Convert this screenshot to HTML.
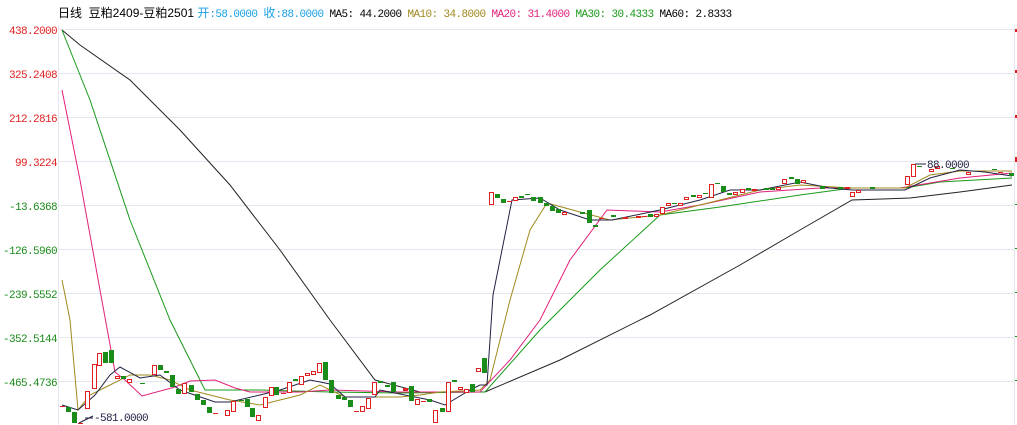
<!DOCTYPE html>
<html><head><meta charset="utf-8"><style>
body{margin:0;background:#fff;width:1017px;height:425px;overflow:hidden;font-family:"Liberation Mono","Noto Sans CJK SC",monospace}
.hd{position:absolute;left:58px;top:4px;font-size:12px;white-space:pre;font-family:"Liberation Sans","Noto Sans CJK SC",sans-serif}
.m{font-family:"Liberation Mono",monospace;font-size:11px;letter-spacing:-0.6px}
</style></head><body>
<div class="hd">日线  豆粕2409-豆粕2501 <span style="color:#1a9fe6">开<span class="m">:58.0000 </span>收<span class="m">:88.0000</span></span><span class="m"> MA5: 44.2000 <span style="color:#a08a1e">MA10: 34.8000</span> <span style="color:#e0207a">MA20: 31.4000</span> <span style="color:#1a9a1a">MA30: 30.4333</span> MA60: 2.8333</span></div>
<svg width="1017" height="425" style="position:absolute;left:0;top:0" xmlns="http://www.w3.org/2000/svg">
<g stroke="#e6e6f0" stroke-width="1">
<line x1="58" y1="29.5" x2="1014" y2="29.5"/><line x1="58" y1="73.5" x2="1014" y2="73.5"/><line x1="58" y1="117.5" x2="1014" y2="117.5"/><line x1="58" y1="161.5" x2="1014" y2="161.5"/><line x1="58" y1="205.5" x2="1014" y2="205.5"/><line x1="58" y1="249.5" x2="1014" y2="249.5"/><line x1="58" y1="293.5" x2="1014" y2="293.5"/><line x1="58" y1="337.5" x2="1014" y2="337.5"/><line x1="58" y1="381.5" x2="1014" y2="381.5"/>
<line x1="58.5" y1="25" x2="58.5" y2="425"/><line x1="1014.5" y1="25" x2="1014.5" y2="425"/>
</g>
<g font-size="11" letter-spacing="-0.6" text-anchor="end" font-family="Liberation Mono,monospace">
<text x="57" y="34" fill="#e02020">438.2000</text><text x="57" y="78" fill="#e02020">325.2408</text><text x="57" y="122" fill="#e02020">212.2816</text><text x="57" y="166" fill="#e02020">99.3224</text>
<text x="57" y="210" fill="#1a8c1a">-13.6368</text><text x="57" y="254" fill="#1a8c1a">-126.5960</text><text x="57" y="298" fill="#1a8c1a">-239.5552</text><text x="57" y="342" fill="#1a8c1a">-352.5144</text><text x="57" y="386" fill="#1a8c1a">-465.4736</text>
</g>
<g fill="#e02020"><rect x="1015" y="29" width="2" height="3"/><rect x="1015" y="70" width="2" height="3"/><rect x="1015" y="115" width="2" height="3"/><rect x="1015" y="157" width="2" height="5"/></g>
<g fill="#1a8c1a"><rect x="1015" y="204" width="2" height="1"/><rect x="1015" y="248" width="2" height="1"/><rect x="1015" y="292" width="2" height="1"/><rect x="1015" y="336" width="2" height="1"/><rect x="1015" y="380" width="2" height="1"/></g>
<g fill="none" stroke-width="1">
<polyline stroke="#222" points="62,30 80,45 130,80 180,130 230,185 280,250 330,320 375,380 420,392 485,392 560,360 650,315 740,265 800,230 852,200 910,198 960,192 1012,185"/>
<polyline stroke="#1a9a1a" points="62,30 90,100 130,220 170,320 200,380 205,390 260,390 330,392 400,393 485,392 540,330 600,270 660,215 720,207 800,195 852,188 905,188 940,182 1012,178"/>
<polyline stroke="#e0207a" points="62,90 80,180 100,290 115,372 125,380 142,396 175,387 190,381 215,380 235,388 250,392 300,392 330,390 400,392 480,392 510,360 540,320 570,260 607,210 660,212 700,205 760,192 820,188 900,188 960,178 1012,173"/>
<polyline stroke="#a08a1e" points="62,280 70,320 78,410 90,395 110,385 130,375 150,375 170,380 190,390 230,400 260,405 300,395 320,385 345,397 400,397 420,395 440,392 480,390 490,380 510,300 530,230 547,203 580,212 610,220 660,215 700,205 760,190 800,185 852,188 905,188 930,175 960,171 1012,171"/>
<polyline stroke="#222244" points="62,405 78,410 95,395 110,375 120,367 140,378 160,375 180,390 215,402 230,402 260,395 280,390 310,380 330,384 345,397 375,397 380,390 430,400 445,405 470,390 480,385 487,385 493,295 512,200 540,198 560,210 590,220 612,220 660,210 700,200 730,190 760,190 800,182 830,188 852,190 905,190 930,178 960,170 985,172 1012,176"/>
</g>
<g fill="#1a8c1a">
<rect x="66" y="407" width="5" height="5"/><rect x="72" y="412" width="5" height="11"/><rect x="103" y="352" width="5" height="11"/><rect x="109" y="350" width="5" height="13"/><rect x="121" y="376" width="5" height="3"/><rect x="140" y="383" width="5" height="1"/><rect x="158" y="365" width="5" height="5"/><rect x="164" y="371" width="5" height="2"/><rect x="170" y="375" width="5" height="12"/><rect x="176" y="389" width="5" height="5"/><rect x="189" y="385" width="5" height="7"/><rect x="195" y="394" width="5" height="6"/><rect x="201" y="400" width="5" height="5"/><rect x="207" y="407" width="5" height="6"/><rect x="239" y="400" width="5" height="1"/><rect x="245" y="399" width="5" height="8"/><rect x="250" y="408" width="5" height="9"/><rect x="274" y="387" width="5" height="8"/><rect x="293" y="379" width="5" height="2"/><rect x="323" y="362" width="5" height="18"/><rect x="329" y="380" width="5" height="13"/><rect x="336" y="395" width="5" height="4"/><rect x="342" y="397" width="5" height="3"/><rect x="348" y="400" width="5" height="7"/><rect x="378" y="381" width="5" height="2"/><rect x="385" y="385" width="5" height="2"/><rect x="391" y="382" width="5" height="10"/><rect x="409" y="386" width="5" height="15"/><rect x="427" y="399" width="5" height="3"/><rect x="440" y="408" width="5" height="4"/><rect x="452" y="380" width="5" height="2"/><rect x="470" y="384" width="5" height="8"/><rect x="482" y="358" width="5" height="15"/>
<rect x="495" y="194" width="5" height="4"/><rect x="501" y="199" width="5" height="4"/><rect x="519" y="196" width="5" height="2"/><rect x="525" y="194" width="5" height="1"/><rect x="531" y="197" width="5" height="4"/><rect x="538" y="197" width="5" height="6"/><rect x="544" y="203" width="5" height="3"/><rect x="550" y="206" width="5" height="5"/><rect x="556" y="209" width="5" height="4"/><rect x="580" y="212" width="5" height="2"/><rect x="587" y="210" width="5" height="13"/><rect x="593" y="225" width="5" height="2"/><rect x="611" y="215" width="5" height="2"/><rect x="648" y="214" width="5" height="3"/><rect x="672" y="203" width="5" height="1"/><rect x="691" y="195" width="5" height="2"/><rect x="703" y="193" width="5" height="1"/><rect x="715" y="183" width="5" height="1"/><rect x="721" y="186" width="5" height="6"/><rect x="727" y="193" width="5" height="2"/><rect x="746" y="188" width="5" height="2"/><rect x="764" y="188" width="5" height="2"/><rect x="770" y="188" width="5" height="2"/><rect x="789" y="177" width="5" height="2"/><rect x="795" y="179" width="5" height="5"/><rect x="820" y="186" width="5" height="3"/><rect x="838" y="187" width="5" height="2"/><rect x="870" y="187" width="5" height="2"/><rect x="917" y="166" width="5" height="1"/><rect x="950" y="168" width="5" height="1"/><rect x="992" y="169" width="5" height="1"/><rect x="1009" y="173" width="5" height="3"/>
</g>
<g fill="#e02020"><rect x="60" y="406" width="5" height="1"/><rect x="78" y="423" width="5" height="1"/><rect x="213" y="413" width="5" height="1"/><rect x="281" y="393" width="5" height="1"/><rect x="354" y="411" width="5" height="1"/><rect x="403" y="388" width="5" height="3"/><rect x="421" y="401" width="5" height="1"/><rect x="507" y="201" width="5" height="1"/><rect x="599" y="218" width="5" height="1"/><rect x="623" y="217" width="5" height="2"/><rect x="642" y="216" width="5" height="1"/><rect x="752" y="189" width="5" height="2"/><rect x="845" y="187" width="5" height="2"/><rect x="998" y="172" width="5" height="1"/></g>
<g fill="#fff" stroke="#e02020" stroke-width="1">
<rect x="85.5" y="391.5" width="4" height="17"/><rect x="92.5" y="364.5" width="4" height="24"/><rect x="97.5" y="353.5" width="4" height="12"/><rect x="115.5" y="376.5" width="4" height="2"/><rect x="127.5" y="379.5" width="4" height="3"/><rect x="152.5" y="365.5" width="4" height="9"/><rect x="182.5" y="383.5" width="4" height="10"/><rect x="225.5" y="410.5" width="4" height="5"/><rect x="231.5" y="401.5" width="4" height="10"/><rect x="256.5" y="415.5" width="4" height="5"/><rect x="263.5" y="397.5" width="4" height="10"/><rect x="269.5" y="387.5" width="4" height="8"/><rect x="287.5" y="382.5" width="4" height="10"/><rect x="299.5" y="376.5" width="4" height="8"/><rect x="305.5" y="373.5" width="4" height="2"/><rect x="311.5" y="371.5" width="4" height="3"/><rect x="317.5" y="363.5" width="4" height="9"/><rect x="360.5" y="406.5" width="4" height="5"/><rect x="366.5" y="398.5" width="4" height="10"/><rect x="372.5" y="382.5" width="4" height="12"/><rect x="415.5" y="399.5" width="4" height="5"/><rect x="433.5" y="410.5" width="4" height="12"/><rect x="446.5" y="382.5" width="4" height="29"/><rect x="458.5" y="387.5" width="4" height="2"/><rect x="464.5" y="389.5" width="4" height="3"/><rect x="476.5" y="368.5" width="4" height="3"/>
<rect x="489.5" y="192.5" width="4" height="12"/><rect x="513.5" y="197.5" width="4" height="3"/><rect x="562.5" y="212.5" width="4" height="2"/><rect x="636.5" y="216.5" width="4" height="1"/><rect x="654.5" y="214.5" width="4" height="2"/><rect x="660.5" y="207.5" width="4" height="6"/><rect x="666.5" y="203.5" width="4" height="2"/><rect x="678.5" y="203.5" width="4" height="2"/><rect x="684.5" y="197.5" width="4" height="2"/><rect x="697.5" y="195.5" width="4" height="2"/><rect x="709.5" y="184.5" width="4" height="13"/><rect x="733.5" y="192.5" width="4" height="2"/><rect x="740.5" y="189.5" width="4" height="3"/><rect x="776.5" y="187.5" width="4" height="2"/><rect x="782.5" y="179.5" width="4" height="4"/><rect x="801.5" y="180.5" width="4" height="2"/><rect x="850.5" y="192.5" width="4" height="4"/><rect x="856.5" y="190.5" width="4" height="2"/><rect x="905.5" y="176.5" width="4" height="8"/><rect x="911.5" y="164.5" width="4" height="12"/><rect x="929.5" y="169.5" width="4" height="2"/><rect x="935.5" y="166.5" width="4" height="2"/><rect x="966.5" y="172.5" width="4" height="2"/></g>
<g stroke="#222244" fill="none"><line x1="79" y1="423" x2="93" y2="416"/><line x1="85" y1="418" x2="93" y2="418"/><line x1="915" y1="164" x2="926" y2="164"/></g>
<text x="94" y="421" font-size="11" letter-spacing="-0.6" font-family="Liberation Mono,monospace" fill="#222244">-581.0000</text>
<text x="927" y="168" font-size="11" letter-spacing="-0.6" font-family="Liberation Mono,monospace" fill="#222244">88.0000</text>
</svg>
</body></html>
